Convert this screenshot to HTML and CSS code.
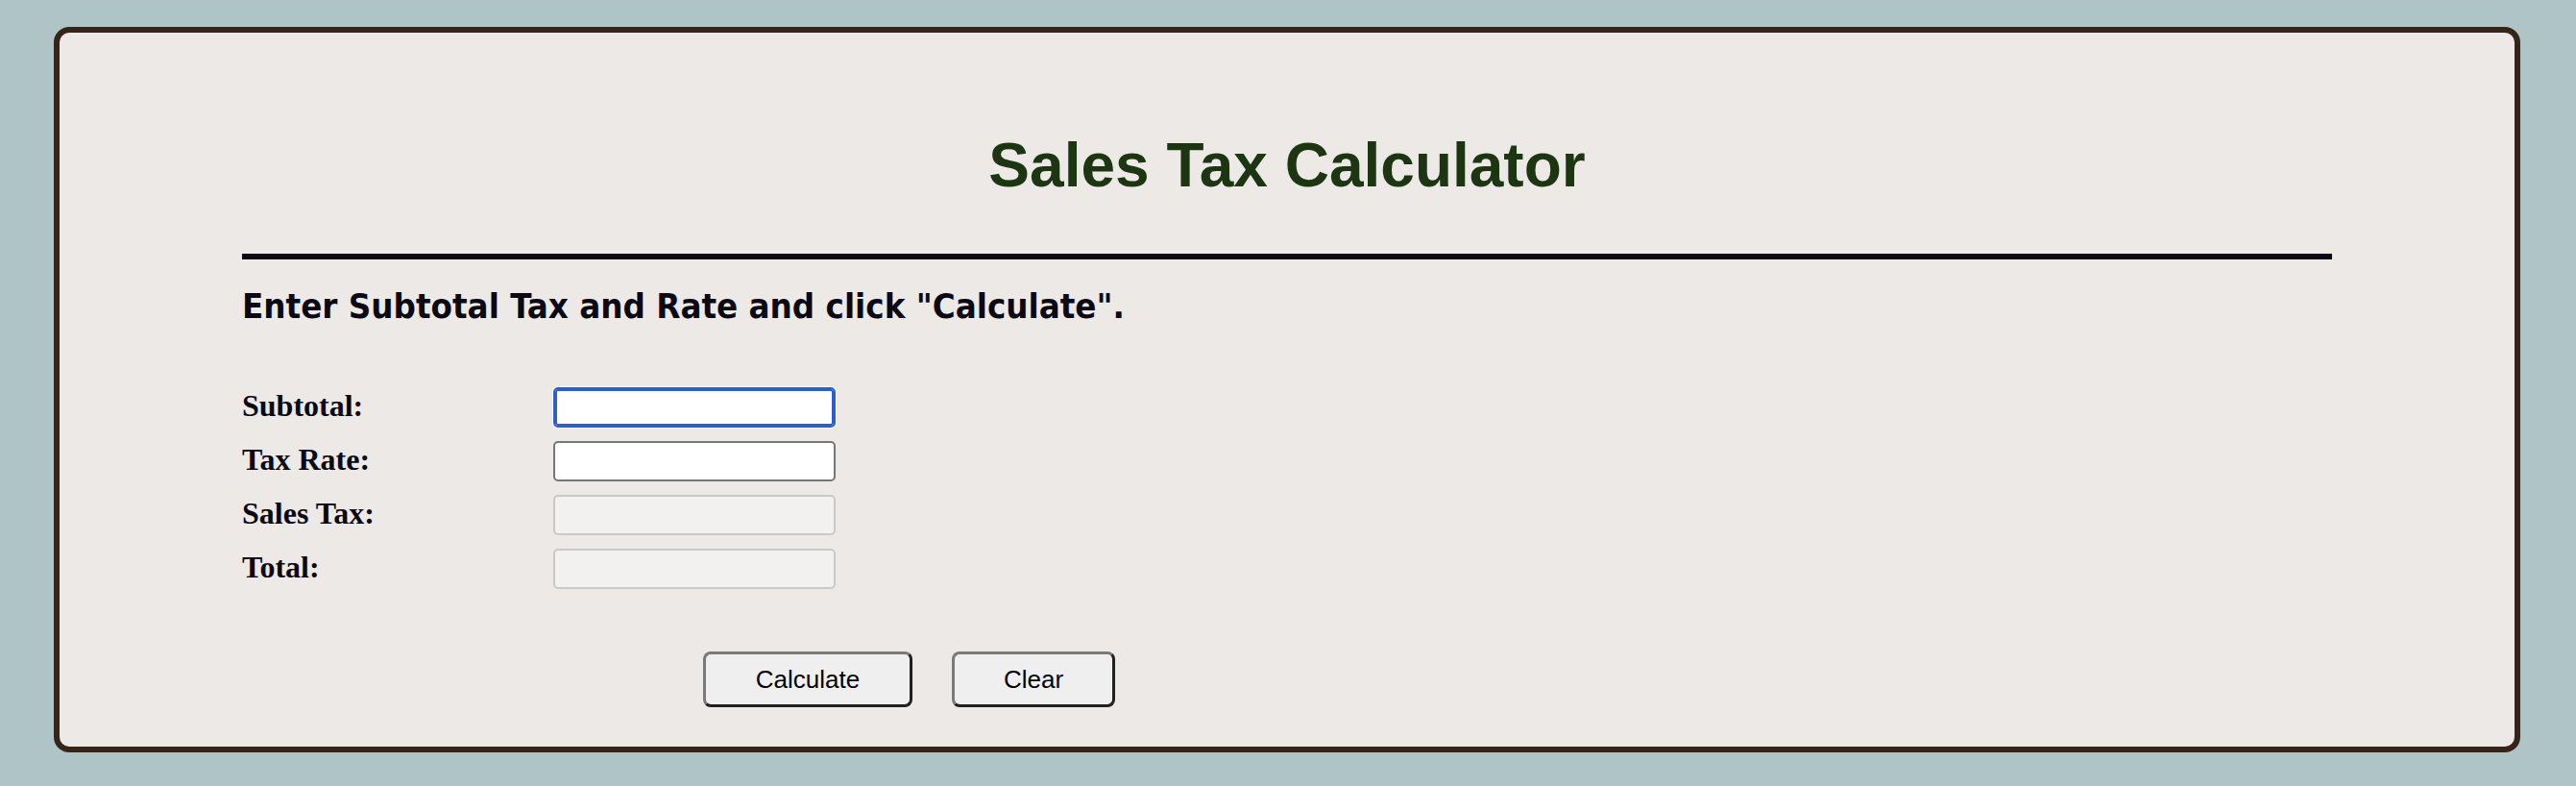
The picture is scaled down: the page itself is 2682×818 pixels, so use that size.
FILE: index.html
```html
<!DOCTYPE html>
<html lang="en">
<head>
<meta charset="utf-8">
<title>Sales Tax Calculator</title>
<link rel="stylesheet" href="styles.css">
</head>
<body>
<main class="card">
  <h1 class="title">Sales Tax Calculator</h1>
  <hr class="rule">
  <h2 class="intro">Enter Subtotal Tax and Rate and click "Calculate".</h2>
  <form class="form">
    <div class="fields">
      <label class="label" for="subtotal">Subtotal:</label>
      <input class="field field-focus" id="subtotal" type="text">
      <label class="label" for="rate">Tax Rate:</label>
      <input class="field" id="rate" type="text">
      <label class="label" for="tax">Sales Tax:</label>
      <input class="field field-disabled" id="tax" type="text" disabled>
      <label class="label" for="total">Total:</label>
      <input class="field field-disabled" id="total" type="text" disabled>
    </div>
    <div class="actions">
      <button class="btn btn-calc" type="button">Calculate</button>
      <button class="btn btn-clear" type="button">Clear</button>
    </div>
  </form>
</main>
</body>
</html>
```

FILE: styles.css
```css
html, body {
  margin: 0;
  padding: 0;
}

body {
  background: #aec4c6;
  width: 2682px;
  height: 818px;
  overflow: hidden;
}

.card {
  box-sizing: border-box;
  margin: 28px 58px 0 56px;
  height: 755px;
  background: #ede9e6;
  border: 6px solid #352417;
  border-radius: 16px;
  padding: 101px 190px 41px 190px;
}

.title {
  margin: 0;
  font-family: "Liberation Sans", Arial, sans-serif;
  font-weight: bold;
  font-size: 64px;
  line-height: 74px;
  color: #1c3612;
  text-align: center;
}

.rule {
  margin: 55px 0 0 0;
  height: 6px;
  border: 0;
  background: #0b0a14;
}

.intro {
  margin: 28px 0 0 0;
  font-family: "DejaVu Sans Condensed", "DejaVu Sans", sans-serif;
  font-stretch: condensed;
  font-weight: bold;
  font-size: 36.3px;
  line-height: 42px;
  color: #0b0a14;
}

.form {
  margin: 63px 0 0 0;
}

.fields {
  display: grid;
  grid-template-columns: 324px 294px;
  row-gap: 14px;
  align-items: center;
}

.label {
  font-family: "Liberation Serif", "Times New Roman", serif;
  font-weight: bold;
  font-size: 32px;
  line-height: 37px;
  padding-bottom: 3px;
  color: #0b0a14;
}

.field {
  box-sizing: border-box;
  width: 294px;
  height: 42px;
  margin: 0;
  padding: 2px 4px;
  background: #ffffff;
  border: 2px solid #767676;
  border-radius: 5px;
  font-family: "Liberation Sans", Arial, sans-serif;
  font-size: 26px;
  outline: none;
}

.field-focus {
  border-color: #2c5fcb;
  box-shadow: inset 0 0 0 2px #2c5fcb, 0 0 0 1px #ffffff;
}

.field-disabled {
  background: #f2f1f0;
  border-color: #cbc9c7;
}

.actions {
  display: flex;
  gap: 41px;
  margin: 65px 0 0 0;
  padding-left: 480px;
}

.btn {
  box-sizing: border-box;
  height: 58px;
  margin: 0;
  padding: 0;
  background: #efefef;
  border: 3px solid;
  border-color: #7a7a7a #202020 #202020 #7a7a7a;
  border-radius: 8px;
  font-family: "Liberation Sans", Arial, sans-serif;
  font-size: 26px;
  color: #000000;
}

.btn-calc {
  width: 218px;
}

.btn-clear {
  width: 170px;
}
```
